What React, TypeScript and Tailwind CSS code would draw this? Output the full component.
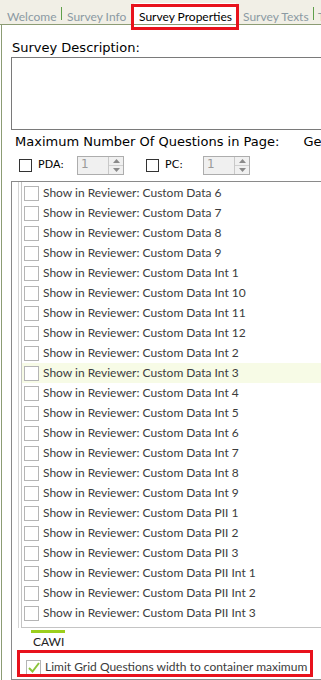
import React from "react";

const items = [
  "Custom Data 6",
  "Custom Data 7",
  "Custom Data 8",
  "Custom Data 9",
  "Custom Data Int 1",
  "Custom Data Int 10",
  "Custom Data Int 11",
  "Custom Data Int 12",
  "Custom Data Int 2",
  "Custom Data Int 3",
  "Custom Data Int 4",
  "Custom Data Int 5",
  "Custom Data Int 6",
  "Custom Data Int 7",
  "Custom Data Int 8",
  "Custom Data Int 9",
  "Custom Data PII 1",
  "Custom Data PII 2",
  "Custom Data PII 3",
  "Custom Data PII Int 1",
  "Custom Data PII Int 2",
  "Custom Data PII Int 3",
];

function Spin() {
  return (
    <div className="flex h-[19px] w-[47px] border border-[#adadad] bg-[#f0f0f0]">
      <div className="flex-1 pl-[3px] text-[12px] leading-[15px] text-[#9a9a9a]">1</div>
      <div className="flex w-[15px] flex-col border-l border-[#c8c8c8]">
        <div className="flex flex-1 items-center justify-center border-b border-[#d0d0d0]">
          <svg width="7" height="4" viewBox="0 0 7 4">
            <path d="M0 4 L3.5 0 L7 4 Z" fill="#8a8a8a" />
          </svg>
        </div>
        <div className="flex flex-1 items-center justify-center">
          <svg width="7" height="4" viewBox="0 0 7 4">
            <path d="M0 0 L3.5 4 L7 0 Z" fill="#8a8a8a" />
          </svg>
        </div>
      </div>
    </div>
  );
}

export default function App() {
  return (
    <div className="relative h-[680px] w-[321px] overflow-hidden bg-white">
      {/* tab strip */}
      <div className="flex h-[25px] w-[400px] items-end border-b border-[#8c9c74] bg-[#f1efe6] font-['Lato',sans-serif] text-[12px] leading-[14px] text-[#8b9aa3]">
        <span className="ml-[7px] w-[54px] whitespace-nowrap">Welcome</span>
        <span className="mb-[4px] h-[13px] w-px bg-[#5ea04a]" />
        <span className="ml-[5px] w-[67px] whitespace-nowrap">Survey Info</span>
        <span className="flex h-[21px] w-[102px] items-end whitespace-nowrap bg-white pl-[5px] text-black">
          Survey Properties
        </span>
        <span className="ml-[7px] w-[70px] whitespace-nowrap">Survey Texts</span>
        <span className="mb-[4px] h-[13px] w-px bg-[#5ea04a]" />
        <span className="ml-[4px] whitespace-nowrap">Test</span>
      </div>

      {/* page body */}
      <div className="ml-px h-[655px] w-[400px] border-l border-[#8c9c74] bg-white">
        <div className="ml-[10px] pt-[15px] font-['DejaVu_Sans',sans-serif] text-[13px] leading-[16px] text-black">
          Survey Description:
        </div>
        <div className="ml-[9px] mt-[1px] h-[73px] border border-[#7a7a7a] bg-white" />

        <div className="ml-[13px] mt-[4px] flex font-['DejaVu_Sans',sans-serif] text-[13px] leading-[16px] text-black">
          <span>Maximum Number Of Questions in Page:</span>
          <span className="ml-[24px]">General</span>
        </div>

        <div className="mt-[6px] flex items-center font-['DejaVu_Sans',sans-serif] text-[11px] text-black">
          <span className="ml-[17px] h-[13px] w-[13px] border border-[#333] bg-white" />
          <span className="ml-[6px] w-[26px]">PDA:</span>
          <span className="ml-[13px]">
            <Spin />
          </span>
          <span className="ml-[22px] h-[13px] w-[13px] border border-[#333] bg-white" />
          <span className="ml-[6px] w-[18px]">PC:</span>
          <span className="ml-[20px]">
            <Spin />
          </span>
        </div>

        {/* list box */}
        <div className="ml-[9px] mt-[6px] h-[499px] border-l border-t border-b border-[#8a8a8a]">
          <div className="flex h-[446px]">
            <div className="ml-[6px] w-px bg-[#d4d4d4]" />
            <div className="ml-[2px] flex-1 border-l border-b border-[#c4c4c4] pt-px font-['Lato',sans-serif] text-[12px] text-[#3c3c3c]">
              {items.map((it) => (
                <div
                  key={it}
                  className={
                    "flex h-[20px] items-center pl-[2px] " +
                    (it === "Custom Data Int 3" ? "bg-[#f7fbe6]" : "")
                  }
                >
                  <span className="h-[15px] w-[15px] border border-[#b5b5b5] bg-white" />
                  <span className="ml-[4px] whitespace-nowrap">Show in Reviewer: {it}</span>
                </div>
              ))}
            </div>
          </div>
          <div className="ml-[19px] mt-[2px] h-[3px] w-[34px] bg-[#9ccf1c]" />
          <div className="ml-[21px] font-['Lato',sans-serif] text-[12px] leading-[18px] text-[#222]">
            CAWI
          </div>
          <div className="mt-[6px] flex h-[20px] items-center pl-[14px] font-['Lato',sans-serif] text-[12px] text-[#3c3c3c]">
            <span className="flex h-[15px] w-[15px] items-center justify-center border border-[#b5b5b5] bg-white">
              <svg width="12" height="11" viewBox="0 0 12 11">
                <path d="M1 6 L4.5 9.5 L11 1" fill="none" stroke="#8cc43c" strokeWidth="2" />
              </svg>
            </span>
            <span className="ml-[4px] whitespace-nowrap">Limit Grid Questions width to container maximum</span>
          </div>
        </div>
      </div>

      {/* red callouts */}
      <div className="pointer-events-none absolute left-[131px] top-[4px] h-[26px] w-[108px] border-[3px] border-[#e8121c]" />
      <div className="pointer-events-none absolute left-[17px] top-[650px] h-[27px] w-[296px] border-[3px] border-[#e8121c]" />
    </div>
  );
}
